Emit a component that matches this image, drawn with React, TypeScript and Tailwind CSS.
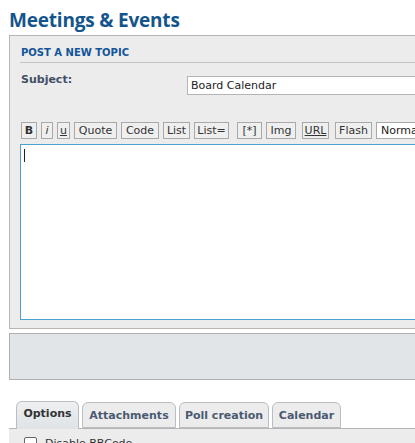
import React from 'react';

const buttons = [
  { label: 'B', cls: 'font-bold w-[16px]' },
  { label: 'i', cls: 'italic w-[12px]' },
  { label: 'u', cls: 'underline w-[13px]' },
  { label: 'Quote', cls: 'w-[43px]' },
  { label: 'Code', cls: 'w-[38px]' },
  { label: 'List', cls: 'w-[27px]' },
  { label: 'List=', cls: 'w-[35px]' },
  { label: '[*]', cls: 'w-[25px] ml-[4px]' },
  { label: 'Img', cls: 'w-[30px]' },
  { label: 'URL', cls: 'underline w-[27px] ml-[2px]' },
  { label: 'Flash', cls: 'w-[37px] ml-[2px]' },
];

const tabs = [
  { label: 'Options', w: 'w-[63px]', active: true },
  { label: 'Attachments', w: 'w-[94px]', active: false },
  { label: 'Poll creation', w: 'w-[90px]', active: false },
  { label: 'Calendar', w: 'w-[69px]', active: false },
];

const App: React.FC = () => {
  return (
    <div className="w-[415px] h-[443px] overflow-hidden bg-white font-['DejaVu_Sans',sans-serif]">
      <div className="pl-[9px] pt-[7px]">
        <h2 className="text-[19px] leading-[26px] font-bold text-[#14558c] font-['Open_Sans',sans-serif] tracking-[-0.2px]">
          Meetings &amp; Events
        </h2>

        <div className="mt-[2px] w-[430px] h-[294px] border border-[#b6b6b6] bg-[#ececec] pl-[10px] pt-[11px]">
          <div className="border-b border-[#c4c4c4] pb-[3px] pl-[1px] text-[10px] leading-[12px] font-bold text-[#13549a] uppercase">
            Post a new topic
          </div>

          <div className="flex mt-[10px]">
            <div className="w-[167px] pl-[1px] text-[11px] leading-[14px] font-bold text-[#425067]">Subject:</div>
            <div className="mt-[3px] w-[240px] h-[19px] border border-[#b4b4b4] bg-white pl-[3px] text-[11px] leading-[17px] text-[#222]">
              Board Calendar
            </div>
          </div>

          <div className="flex items-center gap-[4px] mt-[27px] pl-[1px]">
            {buttons.map((b) => (
              <div
                key={b.label}
                className={`h-[17px] shrink-0 border border-[#a9a9a9] bg-[#efefef] text-center text-[11px] leading-[15px] text-[#333] ${b.cls}`}
              >
                {b.label}
              </div>
            ))}
            <div className="h-[17px] w-[60px] shrink-0 border border-[#a9a9a9] bg-white pl-[4px] text-[11px] leading-[15px] text-[#222]">
              Normal
            </div>
          </div>

          <div className="mt-[5px] h-[176px] border border-[#4a9fd3] bg-white pl-[3px] pt-[4px]">
            <div className="w-px h-[13px] bg-[#222]" />
          </div>
        </div>

        <div className="mt-[4px] w-[430px] h-[47px] border border-[#b0b0b0] bg-[#e2e5e8]" />

        <div className="mt-[21px] pl-[7px] flex items-end gap-[3px] h-[27px]">
          {tabs.map((t) => (
            <div
              key={t.label}
              className={`${t.w} shrink-0 rounded-t-[6px] border border-[#b8bec4] text-center text-[11px] font-bold ${
                t.active
                  ? 'h-[28px] -mb-px border-b-0 bg-gradient-to-b from-[#eef0f1] to-[#dfe3e6] text-[#333] leading-[24px] relative z-10'
                  : 'h-[26px] bg-[#ececec] text-[#4b5a72] leading-[26px]'
              }`}
            >
              {t.label}
            </div>
          ))}
        </div>
        <div className="w-[430px] h-[20px] border-t border-[#b4b4b4] bg-[#ececec] pl-[15px] pt-[8px] flex items-start gap-[8px]">
          <div className="w-[13px] h-[13px] border border-[#666] bg-white rounded-[2px]" />
          <span className="text-[11px] leading-[13px] text-[#333]">Disable BBCode</span>
        </div>
      </div>
    </div>
  );
};

export default App;
